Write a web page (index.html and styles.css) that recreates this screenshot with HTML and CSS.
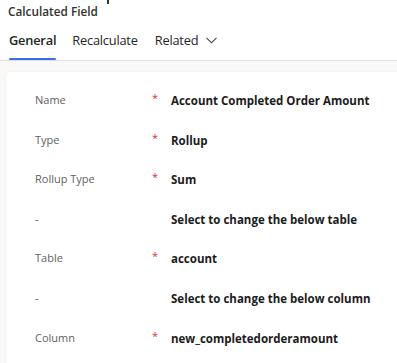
FILE: index.html
```html
<!DOCTYPE html>
<html>
<head>
<meta charset="utf-8">
<link rel="stylesheet" href="styles.css">
</head>
<body>
<header class="header">
  <div class="title-frag"></div>
  <div class="subtitle">Calculated Field</div>
  <nav class="tabs">
    <div class="tab active">General</div>
    <div class="tab">Recalculate</div>
    <div class="tab">Related
      <svg class="chev" width="11" height="7" viewBox="0 0 11 7"><path d="M0.5 0.8 L5.5 5.8 L10.5 0.8" fill="none" stroke="#424242" stroke-width="1.1"/></svg>
    </div>
  </nav>
</header>
<main class="main">
  <section class="card">
    <div class="row"><div class="label">Name</div><div class="req">*</div><div class="value">Account Completed Order Amount</div></div>
    <div class="row"><div class="label">Type</div><div class="req">*</div><div class="value">Rollup</div></div>
    <div class="row"><div class="label">Rollup Type</div><div class="req">*</div><div class="value">Sum</div></div>
    <div class="row"><div class="label">-</div><div class="req"></div><div class="value">Select to change the below table</div></div>
    <div class="row"><div class="label">Table</div><div class="req">*</div><div class="value">account</div></div>
    <div class="row"><div class="label">-</div><div class="req"></div><div class="value">Select to change the below column</div></div>
    <div class="row"><div class="label">Column</div><div class="req">*</div><div class="value">new_completedorderamount</div></div>
  </section>
</main>
</body>
</html>
```
FILE: styles.css
```css
html, body {
  margin: 0;
  padding: 0;
  background: #faf9f8;
  font-family: "Open Sans", "Noto Sans", sans-serif;
  overflow: hidden;
}
.header {
  background: #fff;
  border-bottom: 1px solid #e1dfdd;
  position: relative;
}
.title-frag {
  position: absolute;
  left: 107px;
  top: 0;
  width: 2px;
  height: 4px;
  background: #323130;
}
.subtitle {
  padding: 3px 0 0 8px;
  font-size: 11.8px;
  font-weight: 600;
  color: #323130;
  line-height: 17px;
}
.tabs {
  display: flex;
  padding-left: 9px;
  height: 40px;
  box-sizing: border-box;
  padding-top: 10px;
}
.tab {
  font-size: 12.8px;
  color: #242424;
  line-height: 20px;
  margin-right: 17px;
  position: relative;
  letter-spacing: -0.2px;
  display: flex;
  align-items: flex-start;
}
.tab.active {
  font-weight: 600;
  margin-right: 16px;
}
.tab.active::after {
  content: "";
  position: absolute;
  left: 0;
  right: 0;
  top: 28px;
  height: 2px;
  background: #3a6ee6;
  border-radius: 1px;
}
.chev {
  margin-left: 8px;
  margin-top: 7px;
}
.main {
  padding: 11px 0 0 6px;
}
.card {
  background: #fff;
  border-radius: 4px 0 0 0;
  box-shadow: 0 0 2px rgba(0,0,0,0.08);
  padding-top: 20px;
  height: 300px;
}
.row {
  display: flex;
  align-items: flex-start;
  height: 39.6px;
}
.label {
  width: 117px;
  padding-left: 29px;
  font-size: 11px;
  color: #616161;
  line-height: 16px;
}
.req {
  width: 19px;
  color: #d13438;
  font-size: 11px;
  line-height: 12px;
}
.value {
  font-size: 11.5px;
  font-weight: 700;
  color: #1b1b1b;
  line-height: 18px;
}
```
